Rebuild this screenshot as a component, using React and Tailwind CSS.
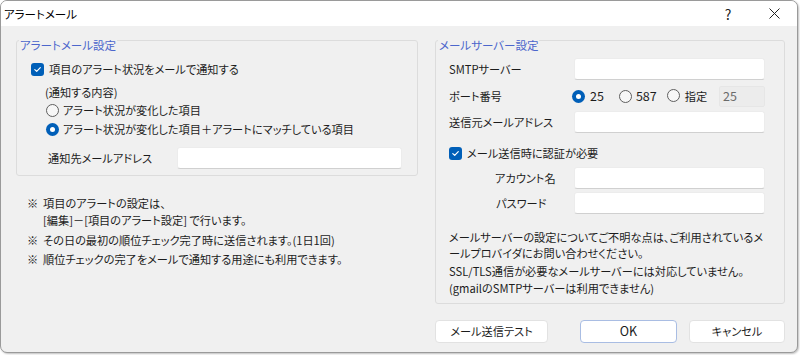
import React from 'react';

const font = "font-['Noto_Sans_CJK_JP','Noto_Sans',sans-serif] [font-feature-settings:'palt']";

function Checkbox() {
  return (
    <span className="flex h-[13px] w-[13px] shrink-0 items-center justify-center rounded-[3px] bg-[#005fb8]">
      <svg width="9" height="9" viewBox="0 0 9 9" fill="none">
        <path d="M1.8 4.6 3.7 6.4 7.3 2.6" stroke="white" strokeWidth="1.2" strokeLinecap="round" strokeLinejoin="round" />
      </svg>
    </span>
  );
}

function Radio({ checked }) {
  if (checked) {
    return (
      <span className="flex h-[13px] w-[13px] shrink-0 items-center justify-center rounded-full bg-[#005fb8]">
        <span className="h-[5px] w-[5px] rounded-full bg-white" />
      </span>
    );
  }
  return <span className="h-[13px] w-[13px] shrink-0 rounded-full border border-[#5f5f5f] bg-[#f7f7f7]" />;
}

function TextBox({ className = '' }) {
  return <div className={'h-[22px] rounded-[3px] border border-[#ececec] border-b-[#d0d0d0] bg-white ' + className} />;
}

function GroupLabel({ children }) {
  return (
    <div className="-mt-[4px] ml-[2px] h-[16px] w-fit bg-[#f0f0f0] px-[1px] text-[11.5px] leading-[16px] text-[#4c66cc]">
      {children}
    </div>
  );
}

export default function App() {
  return (
    <div className={'h-[355px] w-[800px] whitespace-nowrap bg-white text-[11.2px] text-[#1c1c1c] ' + font}>
      <div className="flex h-[353px] w-[798px] flex-col overflow-hidden rounded-[7px] border border-[#9a9a9a] bg-[#f0f0f0] shadow-[1px_1px_2px_rgba(0,0,0,0.25)]">
        {/* title bar */}
        <div className="flex h-[25px] shrink-0 items-center bg-white">
          <div className="pl-[3px] pt-[2px] text-[11.5px] text-black">アラートメール</div>
          <div className="ml-auto flex items-center">
            <div className="w-[46px] pt-[1px] text-center text-[14px] text-[#222]">?</div>
            <div className="flex w-[46px] items-center justify-center">
              <svg width="11" height="11" viewBox="0 0 11 11">
                <path d="M0.5 0.5 10.5 10.5M10.5 0.5 0.5 10.5" stroke="#222" strokeWidth="1" />
              </svg>
            </div>
          </div>
        </div>

        <div className="flex gap-[17px] pl-[15px] pt-[14px]">
          {/* left column */}
          <div className="flex w-[402px] flex-col">
            <div className="flex flex-col rounded-[3px] border border-[#dcdcdc] pb-[6px]">
              <GroupLabel>アラートメール設定</GroupLabel>
              <div className="mt-[6px] flex h-[20px] items-center gap-[5px] pl-[14px]">
                <Checkbox />
                <span>項目のアラート状況をメールで通知する</span>
              </div>
              <div className="mt-[5px] flex h-[17px] items-center pl-[28px]">(通知する内容)</div>
              <div className="flex h-[19px] items-center gap-[4px] pl-[29px]">
                <Radio />
                <span>アラート状況が変化した項目</span>
              </div>
              <div className="flex h-[19px] items-center gap-[4px] pl-[29px]">
                <Radio checked />
                <span>アラート状況が変化した項目＋アラートにマッチしている項目</span>
              </div>
              <div className="mt-[8px] flex h-[22px] items-center pl-[31px] pr-[15px]">
                <span className="w-[129px]">通知先メールアドレス</span>
                <TextBox className="flex-1" />
              </div>
            </div>

            <div className="mt-[19px] flex flex-col pl-[11px] leading-[17px]">
              <div className="flex">
                <span className="w-[16px]">※</span>
                <span>
                  項目のアラートの設定は、
                  <br />
                  [編集]－[項目のアラート設定] で行います。
                </span>
              </div>
              <div className="mt-[3px] flex">
                <span className="w-[16px]">※</span>
                <span>その日の最初の順位チェック完了時に送信されます。(1日1回)</span>
              </div>
              <div className="mt-[2px] flex">
                <span className="w-[16px]">※</span>
                <span>順位チェックの完了をメールで通知する用途にも利用できます。</span>
              </div>
            </div>
          </div>

          {/* right column */}
          <div className="flex w-[350px] flex-col">
            <div className="flex flex-col rounded-[3px] border border-[#dcdcdc] pb-[6px] pr-[19px]">
              <GroupLabel>メールサーバー設定</GroupLabel>
              <div className="mt-[5px] flex h-[22px] items-center pl-[13px]">
                <span className="w-[125px]">SMTPサーバー</span>
                <TextBox className="flex-1" />
              </div>
              <div className="mt-[5px] flex h-[22px] items-center pl-[13px]">
                <span className="w-[123px]">ポート番号</span>
                <div className="flex items-center gap-[5px]">
                  <Radio checked />
                  <span className="text-[12.5px]">25</span>
                </div>
                <div className="ml-[15px] flex items-center gap-[4px]">
                  <Radio />
                  <span className="text-[12.5px]">587</span>
                </div>
                <div className="ml-[10px] flex items-center gap-[5px]">
                  <Radio />
                  <span>指定</span>
                </div>
                <div className="ml-auto flex h-[21px] w-[46px] items-center rounded-[2px] border border-[#e6e6e6] bg-[#ececec] pl-[3px] text-[12.5px] text-[#6a6a6a]">
                  25
                </div>
              </div>
              <div className="mt-[4px] flex h-[22px] items-center pl-[13px]">
                <span className="w-[125px]">送信元メールアドレス</span>
                <TextBox className="flex-1" />
              </div>
              <div className="mt-[10px] flex h-[20px] items-center gap-[5px] pl-[13px]">
                <Checkbox />
                <span>メール送信時に認証が必要</span>
              </div>
              <div className="mt-[4px] flex h-[22px] items-center pl-[13px]">
                <span className="w-[125px] pl-[46px]">アカウント名</span>
                <TextBox className="flex-1" />
              </div>
              <div className="mt-[3px] flex h-[22px] items-center pl-[13px]">
                <span className="w-[125px] pl-[47px]">パスワード</span>
                <TextBox className="flex-1" />
              </div>
              <div className="mt-[15px] pl-[13px] leading-[16px]">
                メールサーバーの設定についてご不明な点は、ご利用されているメ
                <br />
                ールプロバイダにお問い合わせください。
              </div>
              <div className="mt-[2px] pl-[13px] leading-[17px]">
                SSL/TLS通信が必要なメールサーバーには対応していません。
                <br />
                (gmailのSMTPサーバーは利用できません)
              </div>
            </div>

            <div className="mt-[16px] flex h-[23px]">
              <div className="flex w-[113px] items-center justify-center rounded-[4px] border border-[#e2e2e2] bg-white">
                メール送信テスト
              </div>
              <div className="ml-[32px] flex w-[97px] items-center justify-center rounded-[4px] border border-[#a9bde3] bg-white text-[12.5px]">
                OK
              </div>
              <div className="ml-[12px] flex w-[96px] items-center justify-center rounded-[4px] border border-[#e2e2e2] bg-white">
                キャンセル
              </div>
            </div>
          </div>
        </div>
      </div>
    </div>
  );
}
